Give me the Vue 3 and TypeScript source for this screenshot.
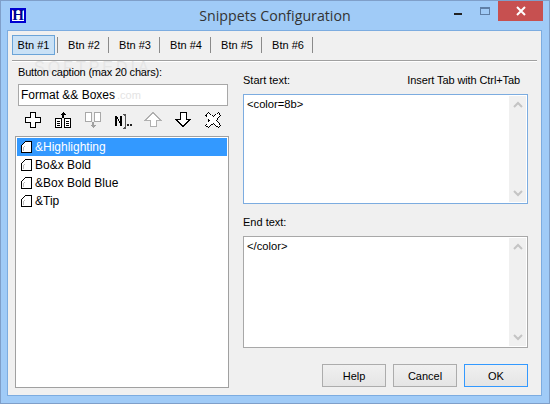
<script setup lang="ts">
const tabs = ['Btn #1', 'Btn #2', 'Btn #3', 'Btn #4', 'Btn #5', 'Btn #6']
const items = ['&Highlighting', 'Bo&x Bold', '&Box Bold Blue', '&Tip']
</script>

<template>
  <div class="window">
    <div class="titlebar">
      <div class="app-icon">H</div>
      <div class="title">Snippets Configuration</div>
      <div class="controls">
        <div class="min"></div>
        <div class="max"></div>
        <div class="close">
          <svg width="10" height="10" viewBox="0 0 10 10"><path d="M1 1l8 8M9 1l-8 8" stroke="#fff" stroke-width="2" /></svg>
        </div>
      </div>
    </div>

    <div class="client">
      <div class="tabs">
        <template v-for="(t, i) in tabs" :key="t">
          <div class="tab" :class="{ active: i === 0 }">{{ t }}</div>
          <div class="tab-sep"></div>
        </template>
      </div>

      <div class="watermark">SOFTPEDIA</div>

      <div class="panes">
        <div class="left">
          <div class="caption-label">Button caption (max 20 chars):</div>
          <div class="caption-input">Format &amp;&amp; Boxes<span class="wm-url">.com</span></div>
          <div class="toolbar">
            <svg class="tool" width="18" height="18" viewBox="0 0 18 18" shape-rendering="crispEdges">
              <path d="M6.500 1.500h5v5h5v5h-5v5h-5v-5h-5v-5h5z" fill="#fff" stroke="#000" />
            </svg>
            <svg class="tool" width="18" height="18" viewBox="0 0 18 18" shape-rendering="crispEdges">
              <path d="M9 1l3 3h-2v3H8V4H6z" fill="#000" />
              <path d="M1.500 7.500h6v9h-6zM10.500 7.500h6v9h-6z" fill="#fff" stroke="#000" />
              <path d="M3 10h3M3 12h3M3 14h3M12 10h3M12 12h3M12 14h3" stroke="#000" />
            </svg>
            <svg class="tool" width="18" height="18" viewBox="0 0 18 18" shape-rendering="crispEdges">
              <path d="M1.500 1.500h6v9h-6zM10.500 1.500h6v9h-6z" fill="#fff" stroke="#a8a8a8" />
              <path d="M8 11h2v3h2l-3 3-3-3h2z" fill="#a0a0a0" />
            </svg>
            <svg class="tool" width="18" height="18" viewBox="0 0 18 18" shape-rendering="crispEdges">
              <path d="M1 5h2v10H1zM6 5h2v10H6zM3 6h1v2h1v2h1v2H5v-2H4V8H3z" fill="#000" />
              <path d="M9 3h1v1h1v12h-1v1H9M12 3h-1M12 17h-1" fill="none" stroke="#555" stroke-width="1" />
              <path d="M13 13h2v2h-2zM16 13h2v2h-2z" fill="#222" />
            </svg>
            <svg class="tool" width="18" height="18" viewBox="0 0 18 18" shape-rendering="crispEdges">
              <path d="M9 1.500l7.500 7.500h-4.500v6.500h-6v-6.500h-4.500z" fill="#fff" stroke="#b0b0b0" />
            </svg>
            <svg class="tool" width="18" height="18" viewBox="0 0 18 18" shape-rendering="crispEdges">
              <path d="M6 1.500h6v6.500h4.500l-7.500 7.500-7.500-7.500h4.500z" fill="#fff" stroke="#000" />
            </svg>
            <svg class="tool" width="18" height="18" viewBox="0 0 18 18" shape-rendering="crispEdges">
              <path d="M4 1.500l5 4 5-4 2.500 2.500-4 5 4 5-2.500 2.500-5-4-5 4-2.500-2.500 4-5-4-5z" fill="#fff" stroke="#000" stroke-dasharray="1 0.600" />
            </svg>
          </div>
          <div class="list">
            <div v-for="(it, i) in items" :key="it" class="list-item" :class="{ sel: i === 0 }">
              <svg width="14" height="14" viewBox="0 0 14 14" shape-rendering="crispEdges">
                <path d="M5.500 1.500h6v11h-10v-7z" fill="#fff" stroke="#000" />
                <path d="M4 6h1v1H3v4h1z" fill="#bbb" />
              </svg>
              <span>{{ it }}</span>
            </div>
          </div>
        </div>

        <div class="right">
          <div class="label-row">
            <span>Start text:</span>
            <span class="hint">Insert Tab with Ctrl+Tab</span>
          </div>
          <div class="memo start">
            <div class="memo-text">&lt;color=8b&gt;</div>
            <div class="scroll">
              <svg width="10" height="7" viewBox="0 0 10 7"><path d="M1 6l4-4 4 4" fill="none" stroke="#c4c4c4" stroke-width="2" /></svg>
              <svg width="10" height="7" viewBox="0 0 10 7"><path d="M1 1l4 4 4-4" fill="none" stroke="#c4c4c4" stroke-width="2" /></svg>
            </div>
          </div>
          <div class="end-label">End text:</div>
          <div class="memo end">
            <div class="memo-text">&lt;/color&gt;</div>
            <div class="scroll">
              <svg width="10" height="7" viewBox="0 0 10 7"><path d="M1 6l4-4 4 4" fill="none" stroke="#c4c4c4" stroke-width="2" /></svg>
              <svg width="10" height="7" viewBox="0 0 10 7"><path d="M1 1l4 4 4-4" fill="none" stroke="#c4c4c4" stroke-width="2" /></svg>
            </div>
          </div>
          <div class="buttons">
            <button class="btn">Help</button>
            <button class="btn">Cancel</button>
            <button class="btn default">OK</button>
          </div>
        </div>
      </div>
    </div>
  </div>
</template>

<style>
html, body {
  margin: 0;
  overflow: hidden;
}
</style>

<style scoped>
.window {
  width: 550px;
  height: 404px;
  box-sizing: border-box;
  background: #a0cbf7;
  border: 1px solid #7f9fc9;
  display: flex;
  flex-direction: column;
  font-family: "Liberation Sans", Arial, sans-serif;
  font-size: 11px;
  color: #000;
}

.titlebar {
  height: 29px;
  flex: none;
  display: flex;
  position: relative;
  justify-content: center;
}

.app-icon {
  position: absolute;
  left: 9px;
  top: 7px;
  width: 12px;
  height: 11px;
  border: 2px solid #0000d0;
  background: #fff;
  color: #000090;
  font-family: "Liberation Serif", serif;
  font-weight: bold;
  font-size: 15px;
  line-height: 11px;
  text-align: center;
}

.title {
  font-family: "Open Sans", "Liberation Sans", sans-serif;
  font-size: 14.2px;
  line-height: 29px;
  color: #333;
}

.controls {
  position: absolute;
  right: 6px;
  top: 0;
  display: flex;
}

.min {
  width: 8px;
  height: 2px;
  background: #222;
  margin: 12px 18px 0 0;
}

.max {
  width: 8px;
  height: 5px;
  border: 1px solid #5f7fa6;
  border-top-width: 2px;
  margin: 6px 8px 0 0;
}

.close {
  width: 45px;
  height: 20px;
  background: #c75050;
  display: flex;
  align-items: center;
  justify-content: center;
}

.client {
  position: relative;
  flex: 1;
  margin: 0 7px 7px 6px;
  background: #f0f0f0;
  border: 1px solid #7cace0;
  display: flex;
  flex-direction: column;
  min-height: 0;
}

.tabs {
  display: flex;
  align-items: flex-start;
  height: 25px;
  margin: 0 4px;
  padding-top: 4px;
  border-bottom: 1px solid #a0a0a0;
  box-shadow: 0 1px 0 #fff;
  flex: none;
}

.tab {
  width: 40px;
  height: 20px;
  line-height: 20px;
  box-sizing: border-box;
  text-align: center;
  margin-left: 3px;
}

.tab.active {
  width: 43px;
  margin-left: 0;
  background: #c9e1f6;
  border: 1px solid #6ba4d8;
  line-height: 18px;
}

.tab-sep {
  width: 1px;
  height: 16px;
  background: #8a8a8a;
  margin: 2px 3px 0 4px;
}

.tab.active + .tab-sep {
  margin-left: 2px;
}

.watermark {
  position: absolute;
  left: 26px;
  top: 28px;
  font-size: 16px;
  line-height: 18px;
  letter-spacing: 3px;
  color: #e6e6e6;
  pointer-events: none;
}

.panes {
  flex: 1;
  display: flex;
  min-height: 0;
  position: relative;
}

.left {
  width: 214px;
  margin-left: 7px;
  display: flex;
  flex-direction: column;
}

.caption-label {
  margin: 4px 0 0 3px;
  line-height: 14px;
  letter-spacing: -0.2px;
}

.caption-input {
  position: relative;
  margin: 5px 0 0 3px;
  height: 22px;
  width: 210px;
  box-sizing: border-box;
  background: #fff;
  border: 1px solid #a8a8a8;
  padding-left: 2px;
  line-height: 20px;
  font-size: 12px;
}

.wm-url {
  position: absolute;
  left: 98px;
  top: 0;
  font-size: 11px;
  color: #e4e4e4;
}

.toolbar {
  display: flex;
  justify-content: flex-start;
  gap: 12px;
  padding: 5px 0 0 9px;
  height: 26px;
  box-sizing: border-box;
}

.tool {
  display: block;
  flex: none;
}

.list {
  margin-top: 4px;
  flex: 1;
  margin-bottom: 7px;
  background: #fff;
  border: 1px solid #a0a0a0;
  padding: 1px;
  font-size: 12px;
}

.list-item {
  height: 18px;
  display: flex;
  align-items: center;
  gap: 1px;
  padding-left: 3px;
}

.list-item svg {
  flex: none;
}

.list-item.sel {
  background: #3399ff;
  color: #fff;
}

.right {
  width: 285px;
  margin-left: 14px;
  display: flex;
  flex-direction: column;
}

.label-row {
  display: flex;
  justify-content: space-between;
  margin-top: 12px;
  line-height: 14px;
  height: 14px;
}

.hint {
  margin-right: 8px;
  letter-spacing: -0.1px;
}

.memo {
  margin-top: 7px;
  background: #fff;
  border: 1px solid #a8a8a8;
  display: flex;
  box-sizing: border-box;
}

.memo.start {
  height: 110px;
  border-color: #7cace0;
}

.memo.end {
  height: 112px;
  margin-top: 7px;
}

.end-label {
  margin-top: 11px;
  line-height: 14px;
}

.memo-text {
  flex: 1;
  padding: 2px 3px;
  line-height: 14px;
  font-size: 11.2px;
}

.scroll {
  width: 17px;
  margin: 1px;
  background: #f0f0f0;
  display: flex;
  flex-direction: column;
  align-items: center;
  justify-content: space-between;
  padding: 5px 0;
  box-sizing: border-box;
}

.scroll svg {
  display: block;
}

.buttons {
  display: flex;
  justify-content: flex-end;
  gap: 7px;
  margin-top: 16px;
}

.btn {
  width: 64px;
  height: 23px;
  padding: 0;
  background: linear-gradient(#f0f0f0, #e5e5e5);
  border: 1px solid #acacac;
  font-family: inherit;
  font-size: 11px;
  color: #000;
}

.btn.default {
  border-color: #3399ff;
}
</style>
